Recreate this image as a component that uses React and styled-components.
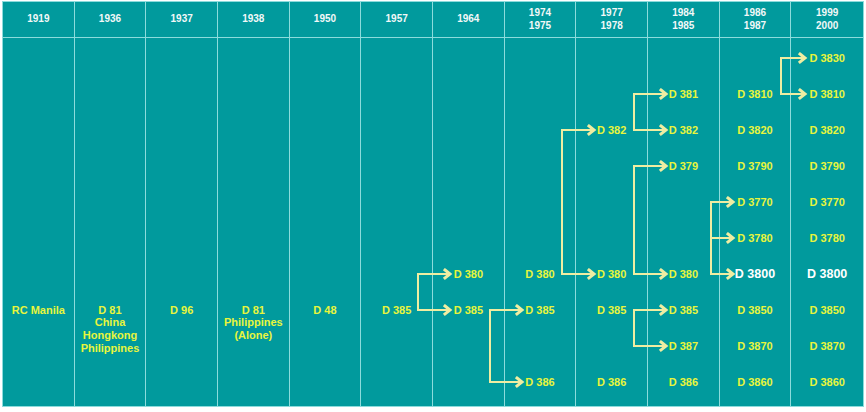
import React from 'react';
import styled, { createGlobalStyle } from 'styled-components';

const ROW_H = 36;
const FIRST_ROW_Y = 58; // page y of the centre of the first body row
const rowY = (r) => FIRST_ROW_Y + r * ROW_H;

const columns = [
  { years: ['1919'], cells: { 7: ['RC Manila'] } },
  { years: ['1936'], cells: { 7: ['D 81', 'China', 'Hongkong', 'Philippines'] } },
  { years: ['1937'], cells: { 7: ['D 96'] } },
  { years: ['1938'], cells: { 7: ['D 81', 'Philippines', '(Alone)'] } },
  { years: ['1950'], cells: { 7: ['D 48'] } },
  { years: ['1957'], cells: { 7: ['D 385'] } },
  { years: ['1964'], cells: { 6: ['D 380'], 7: ['D 385'] } },
  { years: ['1974', '1975'], cells: { 6: ['D 380'], 7: ['D 385'], 9: ['D 386'] } },
  {
    years: ['1977', '1978'],
    cells: { 2: ['D 382'], 6: ['D 380'], 7: ['D 385'], 9: ['D 386'] },
  },
  {
    years: ['1984', '1985'],
    cells: {
      1: ['D 381'], 2: ['D 382'], 3: ['D 379'], 6: ['D 380'],
      7: ['D 385'], 8: ['D 387'], 9: ['D 386'],
    },
  },
  {
    years: ['1986', '1987'],
    cells: {
      1: ['D 3810'], 2: ['D 3820'], 3: ['D 3790'], 4: ['D 3770'], 5: ['D 3780'],
      6: ['D 3800'], 7: ['D 3850'], 8: ['D 3870'], 9: ['D 3860'],
    },
    strong: [6],
  },
  {
    years: ['1999', '2000'],
    cells: {
      0: ['D 3830'], 1: ['D 3810'], 2: ['D 3820'], 3: ['D 3790'], 4: ['D 3770'],
      5: ['D 3780'], 6: ['D 3800'], 7: ['D 3850'], 8: ['D 3870'], 9: ['D 3860'],
    },
    strong: [6],
  },
];

// splits: a vertical bar at x, with arrows to each row ending at `to`
const splits = [
  { x: 418, to: 450, rows: [6, 7] },
  { x: 490, to: 522, rows: [7, 9] },
  { x: 562, to: 594, rows: [2, 6] },
  { x: 634, to: 666, rows: [1, 2] },
  { x: 634, to: 666, rows: [3, 6] },
  { x: 634, to: 666, rows: [7, 8] },
  { x: 711, to: 733, rows: [4, 5, 6] },
  { x: 781, to: 805, rows: [0, 1] },
];

const GlobalStyle = createGlobalStyle`
  html, body {
    margin: 0;
    background: #ffffff;
    font-family: "Liberation Sans", Arial, sans-serif;
  }
`;

const Page = styled.div`
  position: relative;
  width: 866px;
  height: 412px;
  box-sizing: border-box;
  padding: 1px 2px 4px 2px;
`;

const Chart = styled.div`
  display: grid;
  grid-template-columns: repeat(12, 1fr);
  background: #019a9d;
  border: 1px solid #8cdcdc;
`;

const Column = styled.div`
  display: flex;
  flex-direction: column;
  border-right: ${(p) => (p.$last ? 'none' : '1px solid #8cdcdc')};
`;

const HeaderCell = styled.div`
  height: 35px;
  display: flex;
  flex-direction: column;
  align-items: center;
  justify-content: center;
  border-bottom: 1px solid #8cdcdc;
  color: #f2f8f8;
  font-size: 10px;
  font-weight: 700;
  line-height: 12.5px;
`;

const Body = styled.div`
  padding: 2px 0 6px;
`;

const Slot = styled.div`
  height: ${ROW_H}px;
  display: flex;
  flex-direction: column;
  align-items: center;
  padding-top: 11.5px;
  box-sizing: border-box;
  text-align: center;
  white-space: nowrap;
  font-size: ${(p) => (p.$strong ? '12.5px' : '11px')};
  font-weight: 700;
  line-height: ${(p) => (p.$strong ? '13px' : '12.7px')};
  color: ${(p) => (p.$strong ? '#ffffff' : '#e8f53c')};
`;

const Connectors = styled.svg`
  position: absolute;
  inset: 0;
  pointer-events: none;
`;

function Split({ x, to, rows }) {
  const ys = rows.map(rowY);
  const top = Math.min(...ys);
  const bottom = Math.max(...ys);
  return (
    <g>
      <line x1={x} y1={top} x2={x} y2={bottom} />
      {ys.map((y) => (
        <g key={y}>
          <line x1={x} y1={y} x2={to - 2} y2={y} />
          <path
            d={`M${to - 5} ${y - 4} L${to} ${y} L${to - 5} ${y + 4}`}
            strokeWidth="3"
          />
        </g>
      ))}
    </g>
  );
}

export default function App() {
  return (
    <>
      <GlobalStyle />
      <Page>
        <Chart>
          {columns.map((col, ci) => (
            <Column key={ci} $last={ci === columns.length - 1}>
              <HeaderCell>
                {col.years.map((y) => (
                  <span key={y}>{y}</span>
                ))}
              </HeaderCell>
              <Body>
                {Array.from({ length: 10 }, (_, r) => (
                  <Slot key={r} $strong={col.strong?.includes(r)}>
                    {(col.cells[r] || []).map((line) => (
                      <span key={line}>{line}</span>
                    ))}
                  </Slot>
                ))}
              </Body>
            </Column>
          ))}
        </Chart>
        <Connectors width="866" height="412" viewBox="0 0 866 412">
          <g
            fill="none"
            stroke="#efeda2"
            strokeWidth="2"
            strokeLinecap="square"
            strokeLinejoin="miter"
          >
            {splits.map((s, i) => (
              <Split key={i} {...s} />
            ))}
          </g>
        </Connectors>
      </Page>
    </>
  );
}
